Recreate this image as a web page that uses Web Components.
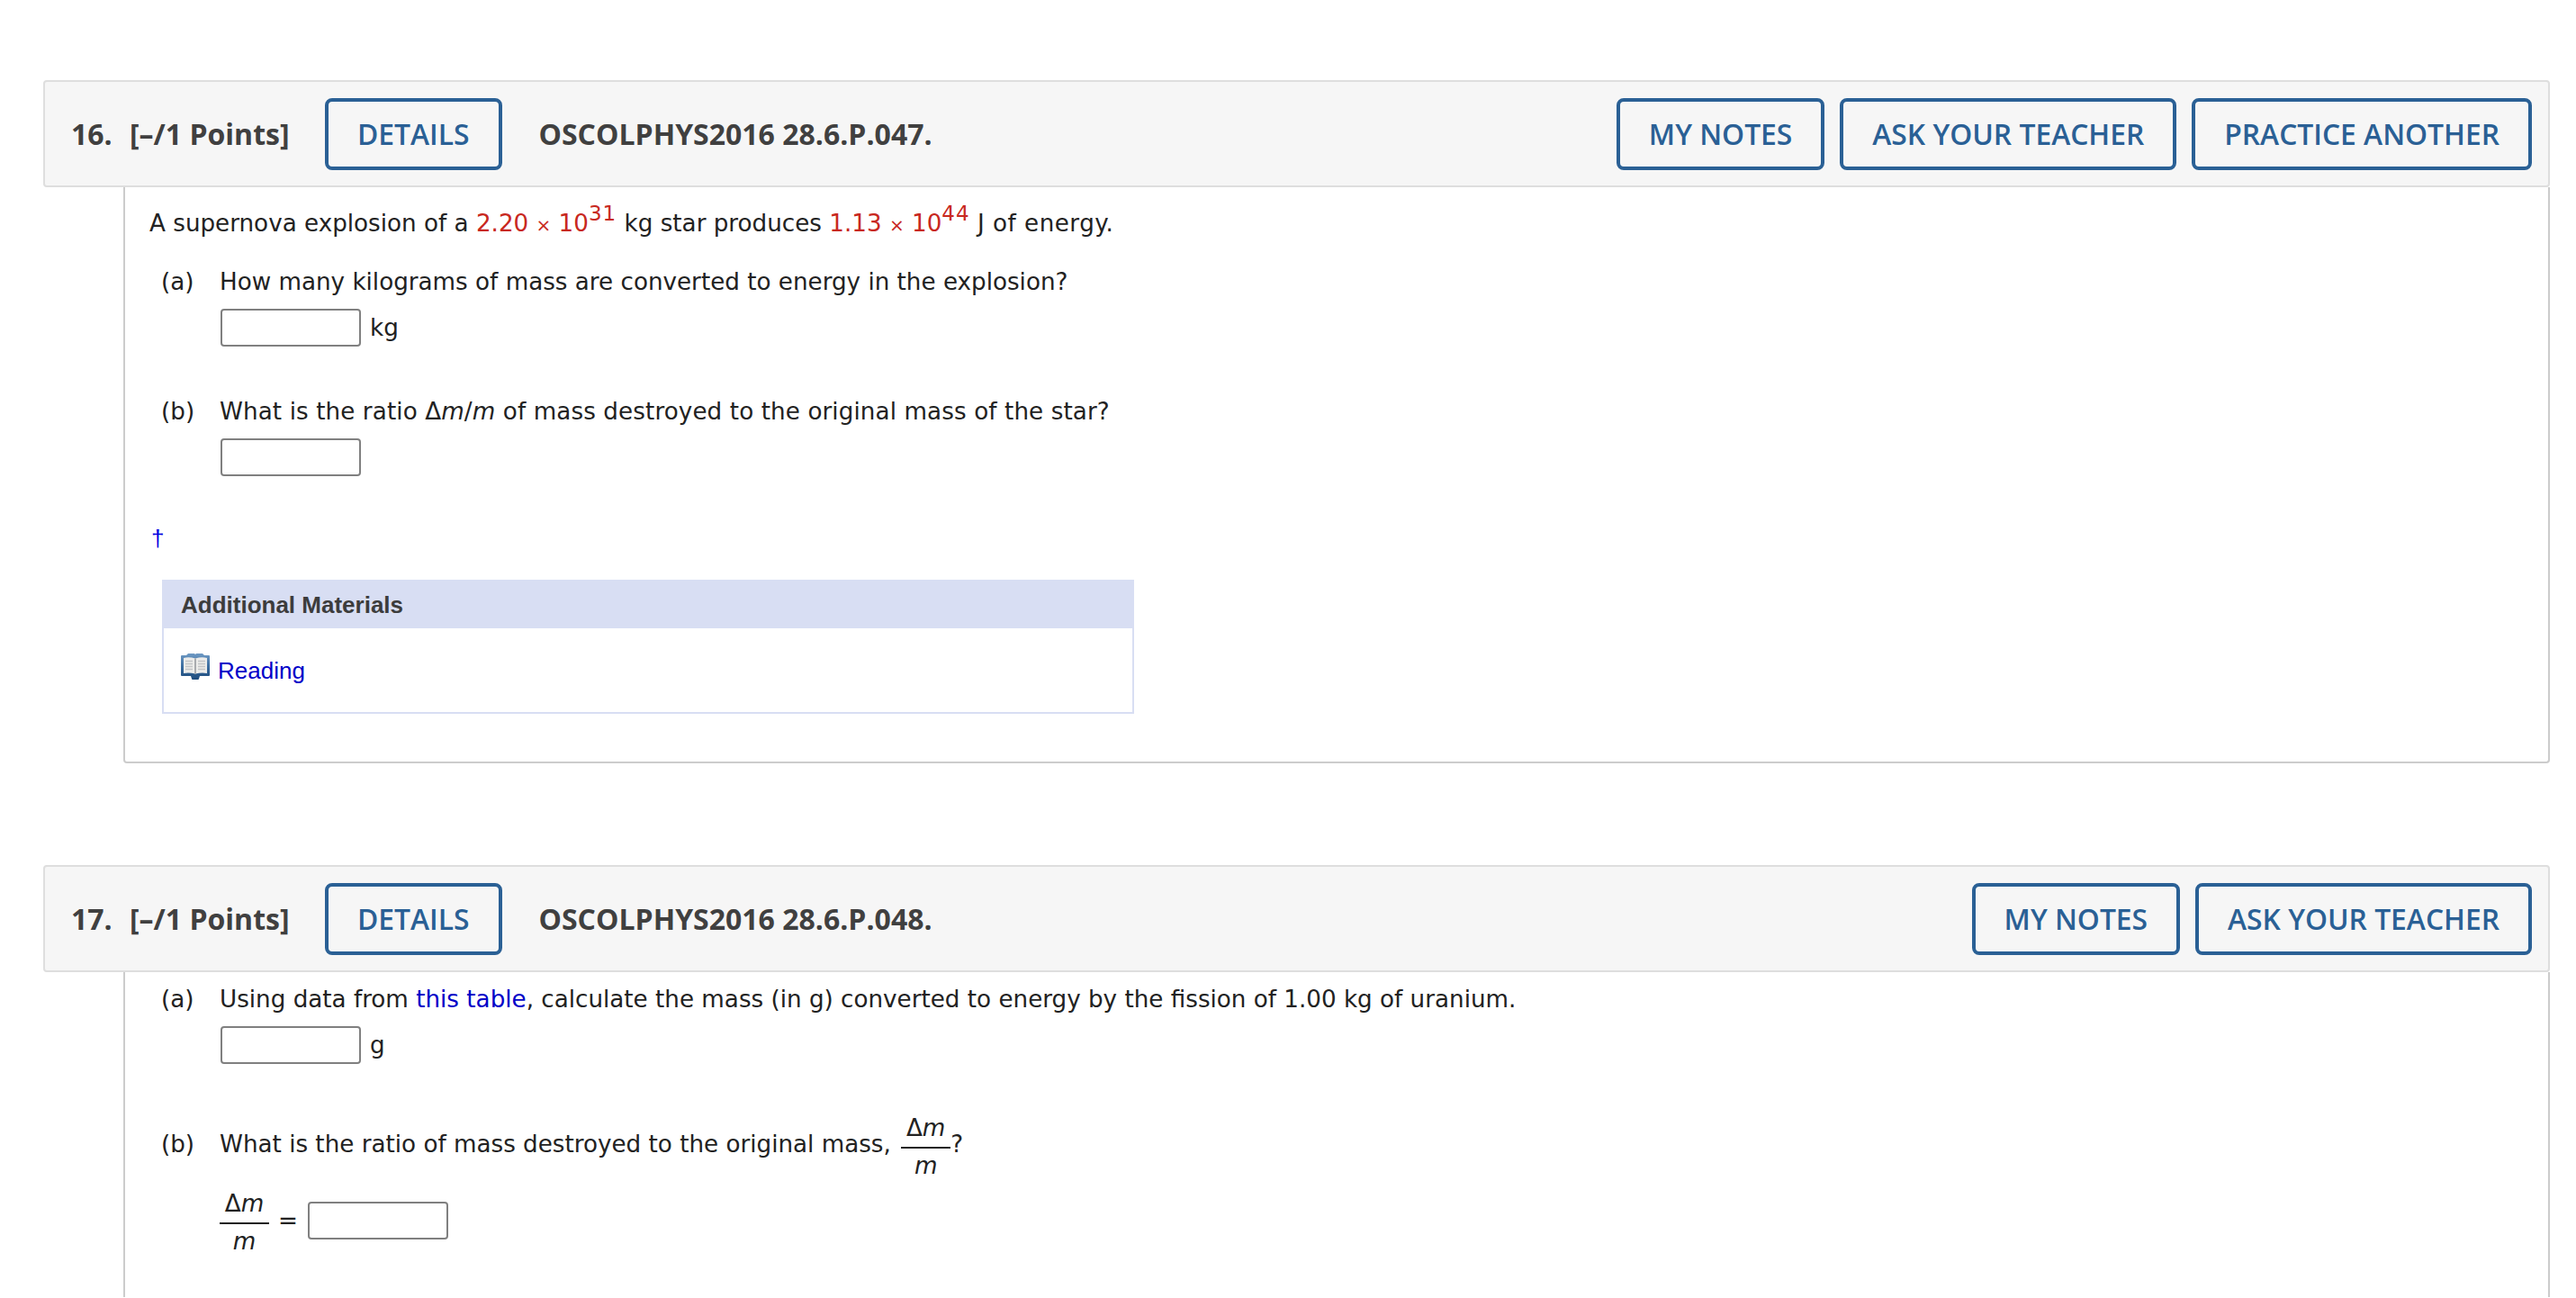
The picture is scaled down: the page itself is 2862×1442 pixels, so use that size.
<!DOCTYPE html>
<html lang="en">
<head>
<meta charset="utf-8">
<title>Assignment</title>
<style>
    html, body { margin: 0; height: 1442px; overflow: hidden; background: #fff; }
    body { padding: 89px 29px 0 48px; box-sizing: border-box; font-family: "DejaVu Sans", sans-serif; }
    question-card + question-card { margin-top: 113px; }
    .red { color: #c8281e; }
    .times { font-size: 20px; }
    a { color: #0000c8; text-decoration: none; }
    sup { font-size: 23px; line-height: 0; vertical-align: 12px; letter-spacing: 1px; }
    i { font-style: italic; }
    .tail { letter-spacing: .5px; }
</style>
</head>
<body>

<question-card number="16." points="[–/1 Points]" code="OSCOLPHYS2016 28.6.P.047." actions="MY NOTES|ASK YOUR TEACHER|PRACTICE ANOTHER">
    <intro-line>A supernova explosion of a <span class="red">2.20 <span class="times">×</span> 10<sup>31</sup></span> kg star produces <span class="red">1.13 <span class="times">×</span> 10<sup>44</sup></span> <span class="tail">J of energy.</span></intro-line>
    <question-part label="(a)">
        How many kilograms of mass are converted to energy in the explosion?
        <answer-box slot="answer" unit="kg"></answer-box>
    </question-part>
    <question-part label="(b)" style="margin-top:54px;letter-spacing:.1px">
        What is the ratio Δ<i>m</i>/<i>m</i> of mass destroyed to the original mass of the star?
        <answer-box slot="answer"></answer-box>
    </question-part>
    <dagger-mark></dagger-mark>
    <materials-panel title="Additional Materials" link="Reading"></materials-panel>
</question-card>

<question-card number="17." points="[–/1 Points]" code="OSCOLPHYS2016 28.6.P.048." actions="MY NOTES|ASK YOUR TEACHER" runs-off>
    <question-part label="(a)" style="margin-top:-10px">
        Using data from <a href="#">this table</a>, calculate the mass (in g) converted to energy by the fission of 1.00 kg of uranium.
        <answer-box slot="answer" unit="g"></answer-box>
    </question-part>
    <question-part label="(b)" style="margin-top:50px">
        What is the ratio of mass destroyed to the original mass, <math-frac></math-frac>?
        <ratio-answer slot="answer"></ratio-answer>
    </question-part>
</question-card>

<script>
class OutlineButton extends HTMLElement {
    constructor() {
        super();
        this.attachShadow({ mode: 'open' });
        this.shadowRoot.innerHTML = `
            <style>
                :host { display: inline-flex; }
                button {
                    height: 80px; padding: 0 32px; box-sizing: border-box; background: transparent;
                    border: 4px solid #2a6095; border-radius: 8px; color: #2a6095;
                    font: 600 31.8px "Open Sans", sans-serif; white-space: nowrap; cursor: pointer;
                }
            </style>
            <button><slot></slot></button>
        `;
    }
}

class QuestionCard extends HTMLElement {
    constructor() {
        super();
        this.attachShadow({ mode: 'open' });
        this.shadowRoot.innerHTML = `
            <style>
                :host { display: block; color: #222; }
                header {
                    display: flex; align-items: center; height: 119px; box-sizing: border-box;
                    padding: 0 18px 0 29px; background: #f6f6f6; border: 2px solid #dedede; border-radius: 4px;
                    font: 700 32px "Open Sans", sans-serif; color: #404040;
                }
                .num { width: 65px; }
                .pts { width: 217px; }
                .code { margin-left: 41px; flex: 1; }
                .actions { display: flex; gap: 17px; }
                .body {
                    margin-left: 89px; padding: 22px 0 53px 0;
                    border: 2px solid #ccc; border-top: 0; border-radius: 0 0 4px 4px;
                    font-size: 26.2px; line-height: 36px;
                }
                :host([runs-off]) .body { height: 361px; box-sizing: border-box; padding-bottom: 0; border-bottom: 0; border-radius: 0; }
                .pad { padding-left: 27px; }
            </style>
            <header>
                <span class="num"></span>
                <span class="pts"></span>
                <outline-button class="details">DETAILS</outline-button>
                <span class="code"></span>
                <div class="actions"></div>
            </header>
            <div class="body"><div class="pad"><slot></slot></div></div>
        `;
    }

    connectedCallback() {
        const shadow = this.shadowRoot;
        shadow.querySelector('.num').textContent = this.getAttribute('number');
        shadow.querySelector('.pts').textContent = this.getAttribute('points');
        shadow.querySelector('.code').textContent = this.getAttribute('code');
        const actions = shadow.querySelector('.actions');
        this.getAttribute('actions').split('|').forEach(label => {
            const btn = document.createElement('outline-button');
            btn.textContent = label;
            actions.appendChild(btn);
        });
    }
}

class IntroLine extends HTMLElement {
    constructor() {
        super();
        this.attachShadow({ mode: 'open' });
        this.shadowRoot.innerHTML = `
            <style>:host { display: block; margin-bottom: 27px; }</style>
            <slot></slot>
        `;
    }
}

class QuestionPart extends HTMLElement {
    constructor() {
        super();
        this.attachShadow({ mode: 'open' });
        this.shadowRoot.innerHTML = `
            <style>
                :host { display: grid; grid-template-columns: 65px 1fr; align-items: baseline; padding-left: 13px; }
                .answer { margin-top: 12px; }
            </style>
            <span class="label"></span>
            <div>
                <div><slot></slot></div>
                <div class="answer"><slot name="answer"></slot></div>
            </div>
        `;
    }

    connectedCallback() {
        this.shadowRoot.querySelector('.label').textContent = this.getAttribute('label');
    }
}

class AnswerBox extends HTMLElement {
    constructor() {
        super();
        this.attachShadow({ mode: 'open' });
        this.shadowRoot.innerHTML = `
            <style>
                :host { display: flex; align-items: center; gap: 10px; }
                input {
                    width: 156px; height: 42px; box-sizing: border-box; margin: 0 0 0 1px; background: #fff;
                    border: 2px solid #808080; border-radius: 4px;
                }
            </style>
            <input type="text"><span class="unit"></span>
        `;
    }

    connectedCallback() {
        this.shadowRoot.querySelector('.unit').textContent = this.getAttribute('unit') || '';
    }
}

class MathFrac extends HTMLElement {
    constructor() {
        super();
        this.attachShadow({ mode: 'open' });
        this.shadowRoot.innerHTML = `
            <style>
                :host { display: inline-flex; flex-direction: column; align-items: stretch; vertical-align: middle; width: 55px; text-align: center; line-height: 34px; margin: 4px 0 0 3px; }
                .top { border-bottom: 2px solid #222; padding-bottom: 4px; }
                .bot { padding-top: 2px; font-style: italic; }
                i { font-style: italic; }
            </style>
            <span class="top">Δ<i>m</i></span>
            <span class="bot">m</span>
        `;
    }
}

class RatioAnswer extends HTMLElement {
    constructor() {
        super();
        this.attachShadow({ mode: 'open' });
        this.shadowRoot.innerHTML = `
            <style>
                :host { display: flex; align-items: center; gap: 10px; margin-top: -8px; }
                math-frac { margin: 4px 0 0 0; }
            </style>
            <math-frac></math-frac><span>=</span><answer-box></answer-box>
        `;
    }
}

class DaggerMark extends HTMLElement {
    constructor() {
        super();
        this.attachShadow({ mode: 'open' });
        this.shadowRoot.innerHTML = `
            <style>:host { display: block; margin-top: 51px; margin-left: 2px; color: #0000e0; line-height: 36px; font-family: "Liberation Sans", sans-serif; }</style>
            †
        `;
    }
}

class MaterialsPanel extends HTMLElement {
    constructor() {
        super();
        this.attachShadow({ mode: 'open' });
        this.shadowRoot.innerHTML = `
            <style>
                :host { display: block; width: 1080px; margin: 28px 0 0 14px; box-sizing: border-box; border: 2px solid #d8def3; border-top: 0; font-family: "Liberation Sans", sans-serif; }
                .title { margin: 0 -2px; padding-left: 21px; height: 54px; line-height: 56px; background: #d8def3; color: #3c3c3c; font-size: 26px; font-weight: bold; }
                .row { display: flex; align-items: center; gap: 9px; height: 93px; padding-left: 19px; box-sizing: border-box; font-size: 26px; }
                a { color: #0000c8; text-decoration: none; }
                svg { display: block; margin-top: -8px; }
            </style>
            <div class="title"></div>
            <div class="row">
                <svg width="32" height="29" viewBox="0 0 32 29">
                    <defs>
                        <linearGradient id="cover" x1="0" y1="0" x2="0" y2="1">
                            <stop offset="0" stop-color="#6f9ac4"/>
                            <stop offset="0.5" stop-color="#3a6c9f"/>
                            <stop offset="1" stop-color="#1d4b7c"/>
                        </linearGradient>
                    </defs>
                    <path d="M0 3q0-1 1-1h5l2-2h7l1 1 1-1h7l2 2h5q1 0 1 1v21q0 1-1 1H21l-1 3q0 1-1 1h-6q-1 0-1-1l-1-3H1q-1 0-1-1z" fill="url(#cover)"/>
                    <path d="M3 5q6-1.500 13 .5q7-2 13-.5v17q-6-1-13 .5q-7-1.500-13-.5z" fill="#ececea"/>
                    <path d="M15 5.500h2v17h-2z" fill="#a9abae"/>
                    <path d="M5 8.500h8M5 11.500h8M5 14.500h8M5 17.500h8M19 8.500h8M19 11.500h8M19 14.500h8M19 17.500h8" stroke="#c2c4c6" stroke-width="1.300" fill="none"/>
                </svg>
                <a href="#"></a>
            </div>
        `;
    }

    connectedCallback() {
        this.shadowRoot.querySelector('.title').textContent = this.getAttribute('title');
        this.shadowRoot.querySelector('a').textContent = this.getAttribute('link');
    }
}

customElements.define('outline-button', OutlineButton);
customElements.define('question-card', QuestionCard);
customElements.define('intro-line', IntroLine);
customElements.define('question-part', QuestionPart);
customElements.define('answer-box', AnswerBox);
customElements.define('math-frac', MathFrac);
customElements.define('ratio-answer', RatioAnswer);
customElements.define('dagger-mark', DaggerMark);
customElements.define('materials-panel', MaterialsPanel);
</script>
</body>
</html>
